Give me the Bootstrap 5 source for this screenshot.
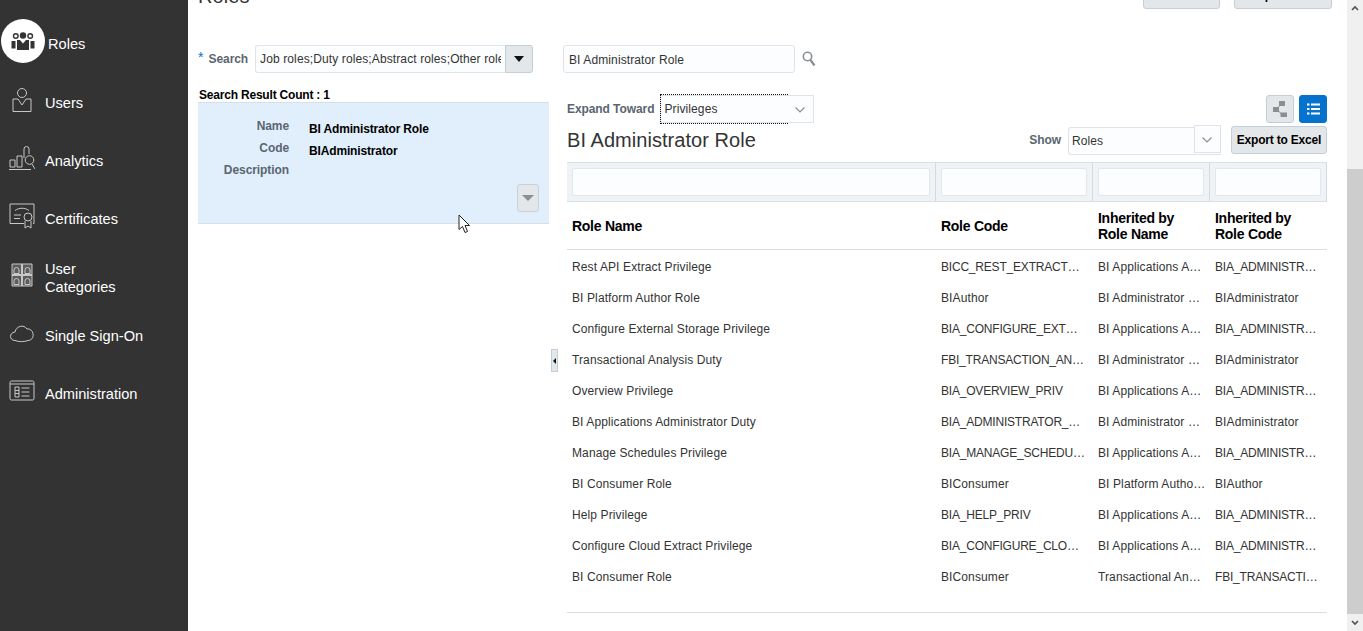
<!DOCTYPE html>
<html lang="en">

<head>
    <meta charset="UTF-8" />
    <meta name="viewport" content="width=device-width, initial-scale=1.0" />
    <title>Roles</title>
    <link href="https://cdn.jsdelivr.net/npm/bootstrap@5.3.0/dist/css/bootstrap.min.css" rel="stylesheet" />
    <style>
        html, body { height: 631px; overflow: hidden; }
        body { font-family: "Liberation Sans", Arial, sans-serif; font-size: 12px; letter-spacing: .11px; color: #333; background: #fff; }
        .app-shell { height: 631px; }

        /* sidebar */
        .side-nav { width: 188px; background: #333; color: #fff; padding-top: 14px; flex: none; letter-spacing: 0; }
        .side-item { height: 58px; padding-left: 9px; font-size: 14.6px; line-height: 18px; color: #fff; }
        .side-item svg { width: 26px; height: 26px; flex: none; margin: 0 10px 6px 0; fill: none; stroke: #c8c8c8; stroke-width: 1; }
        .side-cats { margin-top: 1px; }
        .side-active { height: 60px; padding: 2px 0 0 1px; font-size: 14.6px; }
        .side-disc { width: 44px; height: 44px; border-radius: 50%; background: #fff; margin: 0 3px 8px 0; flex: none; }
        .side-disc svg { width: 24px; height: 18px; fill: #333; }

        /* main column */
        .main-pane { flex: 1 1 auto; min-width: 0; padding: 0 20px 0 10px; overflow: hidden; }
        .top-strip { height: 9px; margin-right: -5px; }
        .page-title { font-size: 20px; line-height: 22px; margin: -15px 0 0; color: #333; font-weight: 400; }
        .top-btn { height: 24px; margin-top: -15px; background: #e4e7ea; border: 1px solid #c4ced7; border-radius: 3px; color: #000; font-size: 12px; font-weight: 700; letter-spacing: -.2px; padding: 0 0 12px; }
        .top-btn-a { width: 77px; margin-right: 14px; }
        .top-btn-b { width: 98px; }
        .split-row { padding-top: 36px; }
        .left-col { width: 351px; flex: none; }
        .right-col { flex: 1 1 auto; min-width: 0; margin-left: 18px; }

        .req-mark { color: #0572ce; font-size: 14px; line-height: 12px; align-self: flex-start; margin-right: 5px; margin-top: 6px; }
        .field-label { color: #5a6570; font-weight: 700; letter-spacing: -.08px; }
        .txt-box { background: #fcfdfe; border: 1px solid #dfe4ea; border-radius: 3px; height: 28px; line-height: 27px; padding: 0 4px; white-space: nowrap; color: #333; }
        .search-box { width: 250px; border-right: 0; border-radius: 3px 0 0 3px; margin-left: 7px; }
        .search-clip { overflow: hidden; }
        .drop-btn { width: 28px; height: 28px; background: #e4e7ea; border: 1px solid #c4ced7; border-radius: 0 3px 3px 0; }
        .tri-down { width: 0; height: 0; border-left: 5px solid transparent; border-right: 5px solid transparent; border-top: 6px solid #111; }
        .result-count { font-weight: 700; color: #000; margin: 15px 0 0 1px; line-height: 14px; letter-spacing: -.2px; }
        .result-card { height: 122px; background: #e1effc; border-top: 1px solid #d6dfe6; border-bottom: 1px solid #d6dfe6; padding: 12px 10px 0 0; }
        .res-label { width: 91px; text-align: right; color: #5a6570; font-weight: 700; line-height: 22px; letter-spacing: -.08px; }
        .res-value { margin: 0 0 -3px 20px; font-weight: 700; color: #000; line-height: 22px; padding-top: 3px; letter-spacing: -.15px; }
        .expand-mini { width: 22px; height: 28px; background: #e4e7ea; border: 1px solid #c9d1d8; border-radius: 3px; margin: 3px 0 0 auto; }
        .tri-gray { width: 0; height: 0; border-left: 6px solid transparent; border-right: 6px solid transparent; border-top: 6px solid #8a8f94; }

        .collapse-tab { position: absolute; left: 551px; top: 349px; width: 7px; height: 23px; background: #e4e7ea; border: 1px solid #c4ced7; }
        .tri-left { width: 0; height: 0; border-top: 3px solid transparent; border-bottom: 3px solid transparent; border-right: 3px solid #111; }

        .node-search { width: 232px; height: 28px; padding-left: 5px; margin: 0 7px 0 -4px; line-height: 28px; }
        .expand-row { margin-top: 22px; height: 28px; }
        .expand-pick { width: 154px; height: 28px; margin-left: 6px; background: #fcfdfe; border: 1px solid #dfe4ea; line-height: 26px; padding-left: 3px; position: relative; }
        .focus-dots { position: absolute; left: -1px; top: -2px; width: 128px; height: 30px; border: 1px dotted #111; border-right: 0; }
        .chev { position: absolute; right: 8px; top: 11px; width: 10px; height: 6px; fill: none; stroke: #8a8f94; stroke-width: 1.2; }
        .view-btns { margin-left: auto; gap: 5px; }
        .view-btn { width: 28px; height: 28px; border-radius: 3px; background: #e4e7ea; border: 1px solid #c4ced7; }
        .view-btn-on { background: #0572ce; border-color: #0572ce; }
        .share-ico { width: 14px; height: 16px; }
        .list-ico { width: 13px; height: 12px; }

        .head-row { margin-top: 3px; height: 28px; }
        .detail-title { font-size: 20px; line-height: 26px; margin: 0; font-weight: 400; color: #333; letter-spacing: .05px; }
        .show-pick { width: 153px; height: 28px; margin: 2px 0 0 7px; position: relative; background: #fcfdfe; border: 1px solid #dfe4ea; border-right: 0; line-height: 26px; padding-left: 3px; border-radius: 3px 0 0 3px; }
        .show-arrow { position: absolute; right: 0; top: -3px; width: 27px; height: 28px; background: #fcfdfe; border: 1px solid #dfe4ea; }
        .excel-btn { height: 28px; width: 96px; margin-left: 10px; background: #e4e7ea; border: 1px solid #c4ced7; border-radius: 3px; color: #000; font-weight: 700; padding: 0; font-size: 12px; line-height: 26px; letter-spacing: -.2px; }

        .role-grid { table-layout: fixed; width: 760px; border-collapse: separate; border-spacing: 0; margin-top: 8px; }
        .role-grid .col-a { width: 369px; }
        .role-grid .col-b { width: 157px; }
        .role-grid .col-c { width: 117px; }
        .role-grid .col-d { width: 117px; }
        .filter-cell { height: 40px; background: #f0f3f6; border-top: 1px solid #d9e0e6; border-bottom: 1px solid #d9e0e6; border-right: 1px solid #d3dbe2; padding: 0 5px; }
        .filter-cell div { height: 28px; background: #fcfdfe; border: 1px solid #e3e7ec; border-radius: 2px; }
        .head-cell { height: 48px; font-weight: 700; color: #000; font-size: 14px; line-height: 16px; padding: 0 5px; border-bottom: 1px solid #d6dfe6; vertical-align: middle; letter-spacing: -.27px; }
        .body-cell { height: 31px; padding: 2px 4px 0 5px; white-space: nowrap; overflow: hidden; text-overflow: ellipsis; color: #333; vertical-align: middle; }
        .body-cell.code-text { letter-spacing: -.2px; padding-right: 8px; }
        .grid-end { width: 760px; border-top: 1px solid #d6dfe6; margin-top: 21px; }

        /* scrollbar */
        .scroll-rail { width: 16px; flex: none; background: #f0f0f0; position: relative; }
        .scroll-thumb { position: absolute; left: 0; right: 0; top: 169px; height: 445px; background: #cdcdcd; }
        .scroll-up { position: absolute; left: 4px; top: 5px; width: 8px; height: 6px; fill: none; stroke: #505050; stroke-width: 1.6; }
        .scroll-down { position: absolute; left: 4px; top: 620px; width: 8px; height: 6px; fill: none; stroke: #505050; stroke-width: 1.6; }
        .mouse-ptr { position: absolute; left: 458px; top: 214px; width: 14px; height: 20px; }
    </style>
</head>

<body>
    <div class="app-shell d-flex">

        <!-- Left navigation -->
        <nav class="side-nav">
            <div class="side-active d-flex align-items-center">
                <span class="side-disc d-flex align-items-center justify-content-center">
                    <svg viewBox="0 0 24 18">
                        <circle cx="12" cy="3.500" r="3.200" />
                        <circle cx="4.800" cy="4" r="2.300" fill="none" stroke="#333" stroke-width="1.400" />
                        <circle cx="19.200" cy="4" r="2.300" fill="none" stroke="#333" stroke-width="1.400" />
                        <path d="M0.500 9h4v7.500h-4z M19.500 9h4v7.500h-4z" />
                        <path d="M6 8h3l3 3.500L15 8h3v10H6z" />
                    </svg>
                </span>
                Roles
            </div>
            <div class="side-item d-flex align-items-center">
                <svg viewBox="0 0 26 26">
                    <circle cx="13" cy="6" r="4.500" />
                    <path d="M9 12H4v12.500h18V12h-5l-4 6z" />
                </svg>
                Users
            </div>
            <div class="side-item d-flex align-items-center">
                <svg viewBox="0 0 26 26">
                    <path d="M1 22v-7h5v7z M8 22V11h5v11z M15 13V4a2 2 0 0 1 5 0v5" />
                    <circle cx="20.500" cy="15" r="4.300" />
                    <path d="M23 19l3 5 M0 24.500h22" />
                </svg>
                Analytics
            </div>
            <div class="side-item d-flex align-items-center">
                <svg viewBox="0 0 26 26">
                    <path d="M15 20.500H1V1h24v19.500h-1" />
                    <path d="M6 7.500c4-3 10-3 14 0 M5 12h7 M5 15.500h6" />
                    <circle cx="19" cy="14" r="4" />
                    <path d="M16 18v7l3-2 3 2v-7" />
                </svg>
                Certificates
            </div>
            <div class="side-item side-cats d-flex align-items-center">
                <svg viewBox="0 0 26 26">
                    <path d="M3 2h20v22H3z" fill="#5c5c5c" />
                    <path d="M13 2v22 M3 13h20" stroke-width="2" />
                    <path d="M5 11.500V8a2.500 2.500 0 0 1 5 0v3.500z M16 11.500V8a2.500 2.500 0 0 1 5 0v3.500z M5 22.500V19a2.500 2.500 0 0 1 5 0v3.500z M16 22.500V19a2.500 2.500 0 0 1 5 0v3.500z" />
                </svg>
                <span>User<br />Categories</span>
            </div>
            <div class="side-item d-flex align-items-center">
                <svg viewBox="0 0 26 26">
                    <path d="M6 20.500c-6 0-6-8 0-8.500 1-6 9-8 12-3 7-1 9 11 1 11.500-4 1.500-9 1.500-13 0z" />
                </svg>
                Single Sign-On
            </div>
            <div class="side-item d-flex align-items-center">
                <svg viewBox="0 0 26 26">
                    <rect x="1" y="3" width="24" height="19" rx="1.500" />
                    <path d="M1 6h24 M6 9h4v10H6z M6 12.500h4 M6 15.500h4 M12.500 10h8 M12.500 14h8 M12.500 18h8" />
                </svg>
                Administration
            </div>
        </nav>

        <!-- Main content -->
        <main class="main-pane">
            <div class="top-strip d-flex">
                <h1 class="page-title">Roles</h1>
                <button type="button" class="top-btn top-btn-a ms-auto"></button>
                <button type="button" class="top-btn top-btn-b">Export Role</button>
            </div>

            <div class="split-row d-flex">
                <!-- Search and results -->
                <section class="left-col">
                    <div class="d-flex align-items-center">
                        <span class="req-mark">*</span>
                        <span class="field-label">Search</span>
                        <div class="txt-box search-box"><div class="search-clip">Job roles;Duty roles;Abstract roles;Other roles</div></div>
                        <div class="drop-btn d-flex align-items-center justify-content-center"><span class="tri-down"></span></div>
                    </div>
                    <div class="result-count">Search Result Count : 1</div>
                    <div class="result-card">
                        <div class="d-flex"><span class="res-label">Name</span><span class="res-value">BI Administrator Role</span></div>
                        <div class="d-flex"><span class="res-label">Code</span><span class="res-value">BIAdministrator</span></div>
                        <div class="d-flex"><span class="res-label">Description</span></div>
                        <div class="expand-mini d-flex align-items-center justify-content-center"><span class="tri-gray"></span></div>
                    </div>
                </section>

                <!-- Role detail -->
                <section class="right-col">
                    <div class="d-flex align-items-center">
                        <div class="txt-box node-search">BI Administrator Role</div>
                        <svg width="14" height="16" viewBox="0 0 14 16" fill="none" stroke="#8a8f94">
                            <circle cx="5.500" cy="5.500" r="4.200" stroke-width="1.600" />
                            <path d="M8.500 9l4 5.500" stroke-width="2.200" />
                        </svg>
                    </div>
                    <div class="expand-row d-flex align-items-center">
                        <span class="field-label">Expand Toward</span>
                        <div class="expand-pick">
                            Privileges
                            <span class="focus-dots"></span>
                            <svg class="chev" viewBox="0 0 10 6"><path d="M.5 .5l4.500 4.500 4.500-4.500" /></svg>
                        </div>
                        <div class="view-btns d-flex">
                            <span class="view-btn d-flex align-items-center justify-content-center">
                                <svg class="share-ico" viewBox="0 0 14 16" fill="#8a8f94">
                                    <path d="M6 0h6v5H6z M0 6h6v5H0z M7.500 11.500H14V16H7.500z" />
                                    <path d="M4 8l4-5M4 8l5 6" stroke="#8a8f94" fill="none" />
                                </svg>
                            </span>
                            <span class="view-btn view-btn-on d-flex align-items-center justify-content-center">
                                <svg class="list-ico" viewBox="0 0 13 12" fill="#fff">
                                    <path d="M0 0.500h2.500v2H0z M4 0.500h9v2H4z M0 5h2.500v2H0z M4 5h9v2H4z M0 9.500h2.500v2H0z M4 9.500h9v2H4z" />
                                </svg>
                            </span>
                        </div>
                    </div>
                    <div class="head-row d-flex align-items-center">
                        <h2 class="detail-title">BI Administrator Role</h2>
                        <span class="field-label ms-auto">Show</span>
                        <div class="show-pick">
                            Roles
                            <span class="show-arrow"><svg class="chev" viewBox="0 0 10 6"><path d="M.5 .5l4.500 4.500 4.500-4.500" /></svg></span>
                        </div>
                        <button type="button" class="excel-btn">Export to Excel</button>
                    </div>

                    <table class="role-grid">
                        <colgroup>
                            <col class="col-a" /><col class="col-b" /><col class="col-c" /><col class="col-d" />
                        </colgroup>
                        <thead>
                            <tr>
                                <td class="filter-cell"><div></div></td>
                                <td class="filter-cell"><div></div></td>
                                <td class="filter-cell"><div></div></td>
                                <td class="filter-cell"><div></div></td>
                            </tr>
                            <tr>
                                <th class="head-cell">Role Name</th>
                                <th class="head-cell">Role Code</th>
                                <th class="head-cell">Inherited by Role Name</th>
                                <th class="head-cell">Inherited by Role Code</th>
                            </tr>
                        </thead>
                        <tbody id="roleRows"></tbody>
                    </table>
                    <div class="grid-end"></div>
                </section>
            </div>
        </main>

        <!-- Browser scrollbar -->
        <div class="scroll-rail">
            <svg class="scroll-up" viewBox="0 0 8 6"><path d="M1 5l3-3 3 3" /></svg>
            <div class="scroll-thumb"></div>
            <svg class="scroll-down" viewBox="0 0 8 6"><path d="M1 1l3 3 3-3" /></svg>
        </div>
    </div>

    <span class="collapse-tab d-flex align-items-center justify-content-center"><span class="tri-left"></span></span>

    <svg class="mouse-ptr" viewBox="0 0 14 20">
        <path d="M1 1v14.500l3.500-3 2.500 6 2.500-1-2.500-6h4.500z" fill="#fff" stroke="#222" />
    </svg>

    <script>
        const rows = [
            ["Rest API Extract Privilege", "BICC_REST_EXTRACT_PRIV", "BI Applications Administrator", "BIA_ADMINISTRATOR_DUTY"],
            ["BI Platform Author Role", "BIAuthor", "BI Administrator Role", "BIAdministrator"],
            ["Configure External Storage Privilege", "BIA_CONFIGURE_EXTERNAL", "BI Applications Administrator", "BIA_ADMINISTRATOR_DUTY"],
            ["Transactional Analysis Duty", "FBI_TRANSACTION_ANALYSIS", "BI Administrator Role", "BIAdministrator"],
            ["Overview Privilege", "BIA_OVERVIEW_PRIV", "BI Applications Administrator", "BIA_ADMINISTRATOR_DUTY"],
            ["BI Applications Administrator Duty", "BIA_ADMINISTRATOR_DUTY", "BI Administrator Role", "BIAdministrator"],
            ["Manage Schedules Privilege", "BIA_MANAGE_SCHEDULES_PRIV", "BI Applications Administrator", "BIA_ADMINISTRATOR_DUTY"],
            ["BI Consumer Role", "BIConsumer", "BI Platform Author Role", "BIAuthor"],
            ["Help Privilege", "BIA_HELP_PRIV", "BI Applications Administrator", "BIA_ADMINISTRATOR_DUTY"],
            ["Configure Cloud Extract Privilege", "BIA_CONFIGURE_CLOUD_PRIV", "BI Applications Administrator", "BIA_ADMINISTRATOR_DUTY"],
            ["BI Consumer Role", "BIConsumer", "Transactional Analysis Duty", "FBI_TRANSACTION_ANALYSIS"]
        ];

        const tbody = document.getElementById("roleRows");
        rows.forEach(row => {
            const tr = document.createElement("tr");
            row.forEach(text => {
                const td = document.createElement("td");
                // upper case codes run narrower than the names
                td.className = /^[A-Z_]+$/.test(text) ? "body-cell code-text" : "body-cell";
                td.textContent = text;
                tr.appendChild(td);
            });
            tbody.appendChild(tr);
        });
    </script>
    <script src="https://cdn.jsdelivr.net/npm/bootstrap@5.3.0/dist/js/bootstrap.bundle.min.js"></script>
</body>

</html>
